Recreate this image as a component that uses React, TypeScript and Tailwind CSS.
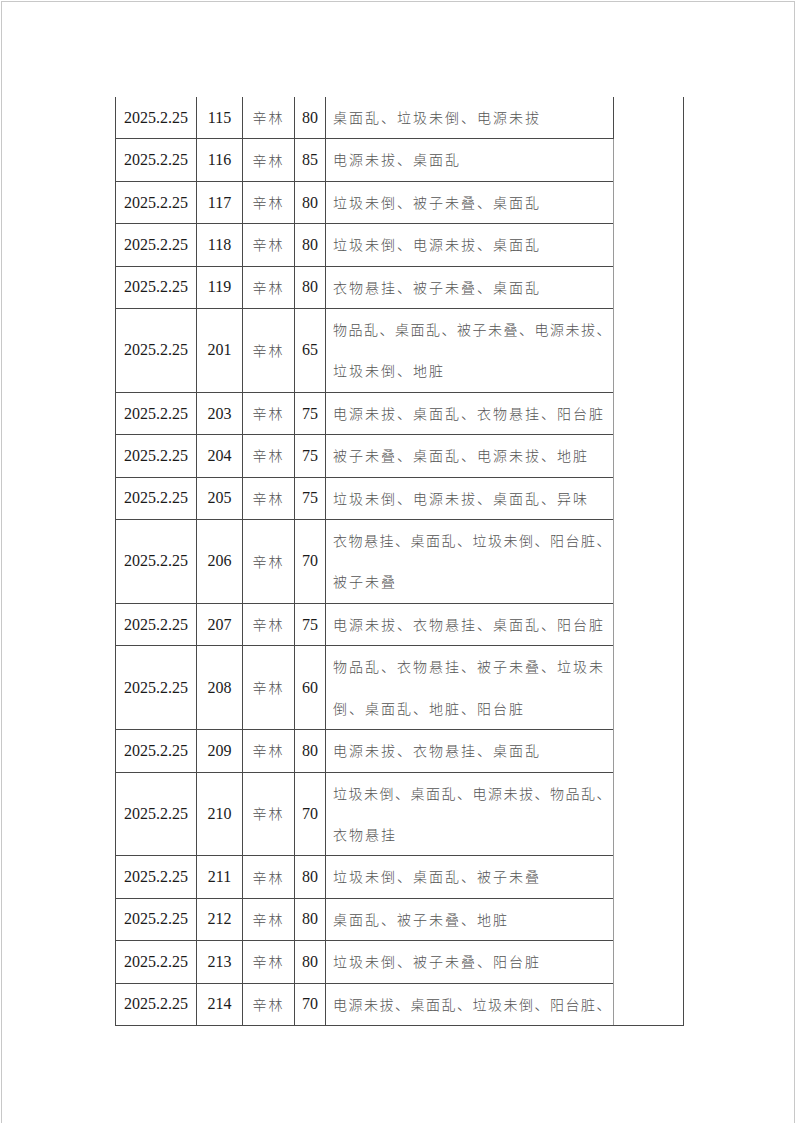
import React from "react";

const rows: [string, string, string[]][] = [
  ["115", "80", ["桌面乱、垃圾未倒、电源未拔"]],
  ["116", "85", ["电源未拔、桌面乱"]],
  ["117", "80", ["垃圾未倒、被子未叠、桌面乱"]],
  ["118", "80", ["垃圾未倒、电源未拔、桌面乱"]],
  ["119", "80", ["衣物悬挂、被子未叠、桌面乱"]],
  ["201", "65", ["物品乱、桌面乱、被子未叠、电源未拔、", "垃圾未倒、地脏"]],
  ["203", "75", ["电源未拔、桌面乱、衣物悬挂、阳台脏"]],
  ["204", "75", ["被子未叠、桌面乱、电源未拔、地脏"]],
  ["205", "75", ["垃圾未倒、电源未拔、桌面乱、异味"]],
  ["206", "70", ["衣物悬挂、桌面乱、垃圾未倒、阳台脏、", "被子未叠"]],
  ["207", "75", ["电源未拔、衣物悬挂、桌面乱、阳台脏"]],
  ["208", "60", ["物品乱、衣物悬挂、被子未叠、垃圾未", "倒、桌面乱、地脏、阳台脏"]],
  ["209", "80", ["电源未拔、衣物悬挂、桌面乱"]],
  ["210", "70", ["垃圾未倒、桌面乱、电源未拔、物品乱、", "衣物悬挂"]],
  ["211", "80", ["垃圾未倒、桌面乱、被子未叠"]],
  ["212", "80", ["桌面乱、被子未叠、地脏"]],
  ["213", "80", ["垃圾未倒、被子未叠、阳台脏"]],
  ["214", "70", ["电源未拔、桌面乱、垃圾未倒、阳台脏、"]],
];

const serif = { fontFamily: '"Liberation Serif", "Times New Roman", serif' };
const cjk = { fontFamily: '"Noto Sans CJK SC", "Noto Sans", sans-serif' };

export default function App() {
  return (
    <div className="w-[796px] h-[1123px] bg-white pt-[1px] pl-[1px] overflow-hidden">
      <div className="w-[794px] h-[1122px] border-l border-t border-r border-[#c8c8c8] pt-[95px] pl-[113px]">
        <table className="border-collapse table-fixed w-[568px]">
          <colgroup>
            <col className="w-[81px]" />
            <col className="w-[46px]" />
            <col className="w-[52px]" />
            <col className="w-[31px]" />
            <col className="w-[288px]" />
            <col className="w-[70px]" />
          </colgroup>
          <tbody>
            {rows.map(([room, score, lines], i) => {
              const top = i === 0 ? "border-t-0" : "border-t";
              return (
                <tr key={room}>
                  <td
                    className={`p-0 border-l border-r border-b ${top} border-[#4a4a4a] text-center align-middle text-[16px] text-[#1a1a1a]`}
                    style={serif}
                  >
                    2025.2.25
                  </td>
                  <td
                    className={`p-0 border-l border-r border-b ${top} border-[#4a4a4a] text-center align-middle text-[16px] text-[#1a1a1a]`}
                    style={serif}
                  >
                    {room}
                  </td>
                  <td
                    className={`p-0 border-l border-r border-b ${top} border-[#4a4a4a] text-center align-middle text-[14px] tracking-[2px] font-light text-[#555]`}
                    style={cjk}
                  >
                    辛林
                  </td>
                  <td
                    className={`p-0 border-l border-r border-b ${top} border-[#4a4a4a] text-center align-middle text-[16px] text-[#1a1a1a]`}
                    style={serif}
                  >
                    {score}
                  </td>
                  <td
                    className={`p-0 pl-[7px] border-l border-r border-b ${top} border-[#4a4a4a] text-left align-middle text-[14px] font-light text-[#555] whitespace-nowrap`}
                    style={cjk}
                  >
                    {lines.map((l, j) => (
                      <div
                        key={j}
                        className={
                          l.length >= 18
                            ? "leading-[41.4px] tracking-[1.5px]"
                            : "leading-[41.4px] tracking-[2px]"
                        }
                      >
                        {l}
                      </div>
                    ))}
                  </td>
                  {i === 0 && (
                    <td
                      rowSpan={rows.length}
                      className="p-0 border-l border-[#9a9a9a] border-r-[1px] border-r-[#4a4a4a] border-b border-b-[#4a4a4a] border-t-0"
                    />
                  )}
                </tr>
              );
            })}
          </tbody>
        </table>
      </div>
    </div>
  );
}
